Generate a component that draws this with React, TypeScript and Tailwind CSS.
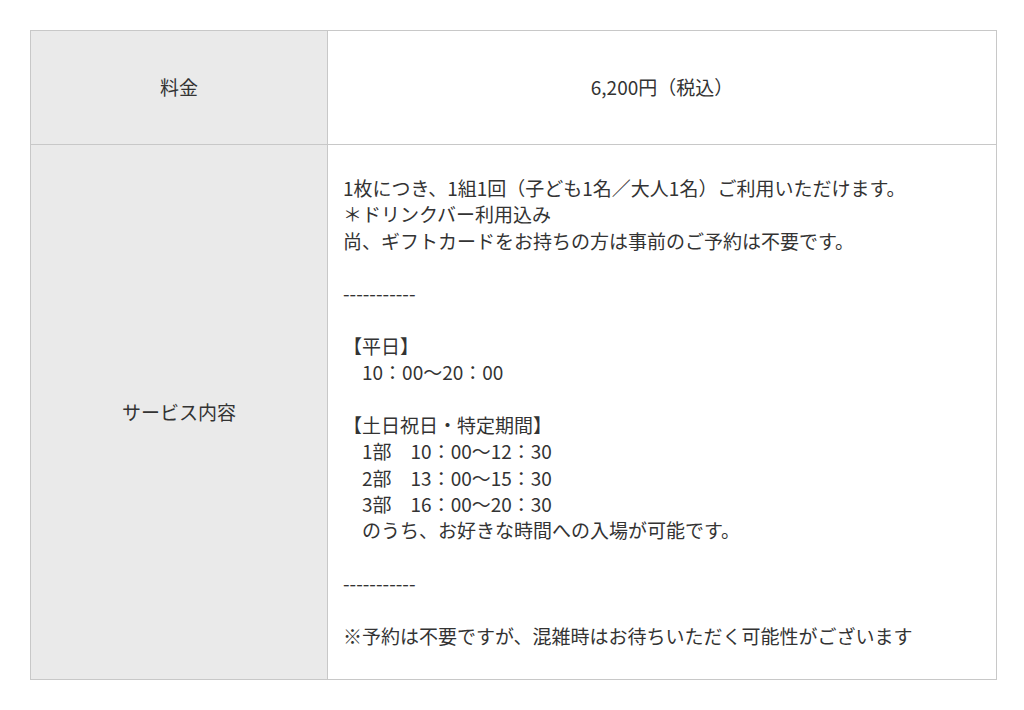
import type { JSX } from 'react'

const FONT = '"Noto Sans CJK JP", "Noto Sans", sans-serif'

// Service description lines; blank strings keep the empty rows.
const DETAIL = [
  '1枚につき、1組1回（子ども1名／大人1名）ご利用いただけます。',
  '＊ドリンクバー利用込み',
  '尚、ギフトカードをお持ちの方は事前のご予約は不要です。',
  '',
  '-----------',
  '',
  '【平日】',
  '　10：00～20：00',
  '',
  '【土日祝日・特定期間】',
  '　1部　10：00～12：30',
  '　2部　13：00～15：30',
  '　3部　16：00～20：30',
  '　のうち、お好きな時間への入場が可能です。',
  '',
  '-----------',
  '',
  '※予約は不要ですが、混雑時はお待ちいただく可能性がございます',
]

const App = (): JSX.Element => {
  return (
    <div className="min-h-[710px] bg-white pl-[30px] pt-[30px] text-[#333]" style={{ fontFamily: FONT }}>
      <table className="w-[967px] border-collapse text-[19px] leading-[26.35px]">
        <tbody>
          <tr>
            <th className="h-[114px] w-[297px] border border-[#c8c8c8] bg-[#eaeaea] text-center font-normal">料金</th>
            <td className="h-[114px] border border-[#c8c8c8] text-center">6,200円（税込）</td>
          </tr>
          <tr>
            <th className="w-[297px] border border-[#c8c8c8] bg-[#eaeaea] text-center font-normal">サービス内容</th>
            <td className="border border-[#c8c8c8] px-[15px] py-[30px] text-left">
              {DETAIL.map((line, i) => (
                <div key={i} className="min-h-[26.35px] whitespace-pre">
                  {line}
                </div>
              ))}
            </td>
          </tr>
        </tbody>
      </table>
    </div>
  )
}

export default App
